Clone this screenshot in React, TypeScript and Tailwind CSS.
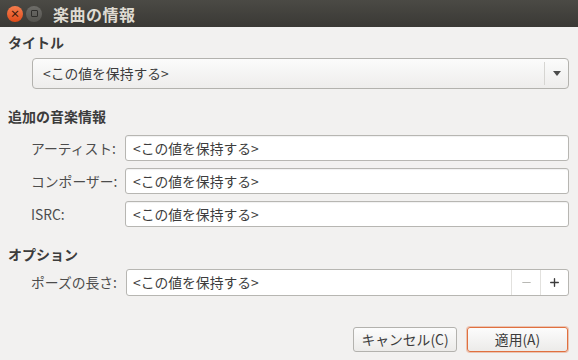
import { Minus, Plus } from "lucide-react";

const KEEP = "<この値を保持する>";

function Entry({ className = "" }: { className?: string }) {
  return (
    <div
      className={`flex items-center h-[26px] flex-1 rounded-[3px] border border-[#b7b6b2] bg-white pl-[7px] text-[13.8px] text-[#3c3c3c] shadow-[inset_0_1px_1px_rgba(0,0,0,0.06)] ${className}`}
    >
      {KEEP}
    </div>
  );
}

function Row({ label, children }: { label: string; children: React.ReactNode }) {
  return (
    <div className="flex items-center pl-[31px] pr-[9px]">
      <span className="w-[94px] shrink-0 text-[13.8px] text-[#4c4c4c]">{label}</span>
      {children}
    </div>
  );
}

function Heading({ children, className = "" }: { children: React.ReactNode; className?: string }) {
  return (
    <h2 className={`px-[8px] h-[20px] leading-[20px] text-[14px] font-bold text-[#3c3c3c] ${className}`}>
      {children}
    </h2>
  );
}

export default function App() {
  return (
    <div
      className="w-[578px] h-[360px] flex flex-col bg-[#f2f1f0] overflow-hidden"
      style={{ fontFamily: '"Noto Sans CJK JP", "Noto Sans", sans-serif' }}
    >
      {/* title bar */}
      <div className="h-[27px] shrink-0 flex items-center bg-gradient-to-b from-[#4b4a45] to-[#3a3935] pl-[7px]">
        <div className="w-[16px] h-[16px] rounded-full bg-gradient-to-b from-[#f57d4d] to-[#df4a16] flex items-center justify-center text-[#3a1a0c] text-[10px] leading-none font-bold">
          ×
        </div>
        <div className="ml-[3px] w-[16px] h-[16px] rounded-full bg-gradient-to-b from-[#6e6d69] to-[#55544f] flex items-center justify-center">
          <div className="w-[7px] h-[7px] border border-[#2f2e2b] rounded-[1px]" />
        </div>
        <span className="ml-[11px] text-[16px] font-bold text-[#dfdbd2] tracking-[0.5px]">楽曲の情報</span>
      </div>

      <Heading className="mt-[5px]">タイトル</Heading>
      <div className="mt-[6px] ml-[32px] mr-[9px] h-[31px] flex items-center rounded-[4px] border border-[#b3b2ae] bg-gradient-to-b from-[#fbfbfb] to-[#eeedec]">
        <span className="flex-1 pl-[10px] text-[13.8px] text-[#3c3c3c]">{KEEP}</span>
        <div className="w-px h-[23px] bg-[#d6d5d2]" />
        <div className="w-[23px] flex justify-center">
          <svg width="8" height="5" viewBox="0 0 8 5">
            <path d="M0 0h8L4 5z" fill="#4c4c4c" />
          </svg>
        </div>
      </div>

      <Heading className="mt-[17px]">追加の音楽情報</Heading>
      <div className="mt-[9px] flex flex-col gap-[7px]">
        <Row label="アーティスト:">
          <Entry />
        </Row>
        <Row label="コンポーザー:">
          <Entry />
        </Row>
        <Row label="ISRC:">
          <Entry />
        </Row>
      </div>

      <Heading className="mt-[17px]">オプション</Heading>
      <div className="mt-[5px]">
        <Row label="ポーズの長さ:">
          <div className="flex-1 h-[27px] flex rounded-[3px] border border-[#b7b6b2] bg-white ml-[1px]">
            <span className="flex-1 flex items-center pl-[6px] text-[13.8px] text-[#3c3c3c]">{KEEP}</span>
            <div className="w-[29px] flex items-center justify-center border-l border-[#e2e1de]">
              <Minus size={13} strokeWidth={1.5} color="#a8a7a3" />
            </div>
            <div className="w-[28px] flex items-center justify-center border-l border-[#e2e1de]">
              <Plus size={13} strokeWidth={2.5} color="#3c3c3c" />
            </div>
          </div>
        </Row>
      </div>

      <div className="mt-auto mb-[8px] mr-[10px] flex justify-end gap-[10px]">
        <button className="h-[25px] w-[104px] rounded-[3px] border border-[#b3b2ae] bg-gradient-to-b from-[#fcfcfc] to-[#ecebe9] text-[13.8px] text-[#3c3c3c]">
          キャンセル(C)
        </button>
        <button className="h-[25px] w-[101px] rounded-[3px] border border-[#e0703f] bg-gradient-to-b from-[#fcfcfc] to-[#ecebe9] text-[13.8px] text-[#3c3c3c] shadow-[0_0_0_1px_rgba(224,112,63,0.35)]">
          適用(A)
        </button>
      </div>
    </div>
  );
}
